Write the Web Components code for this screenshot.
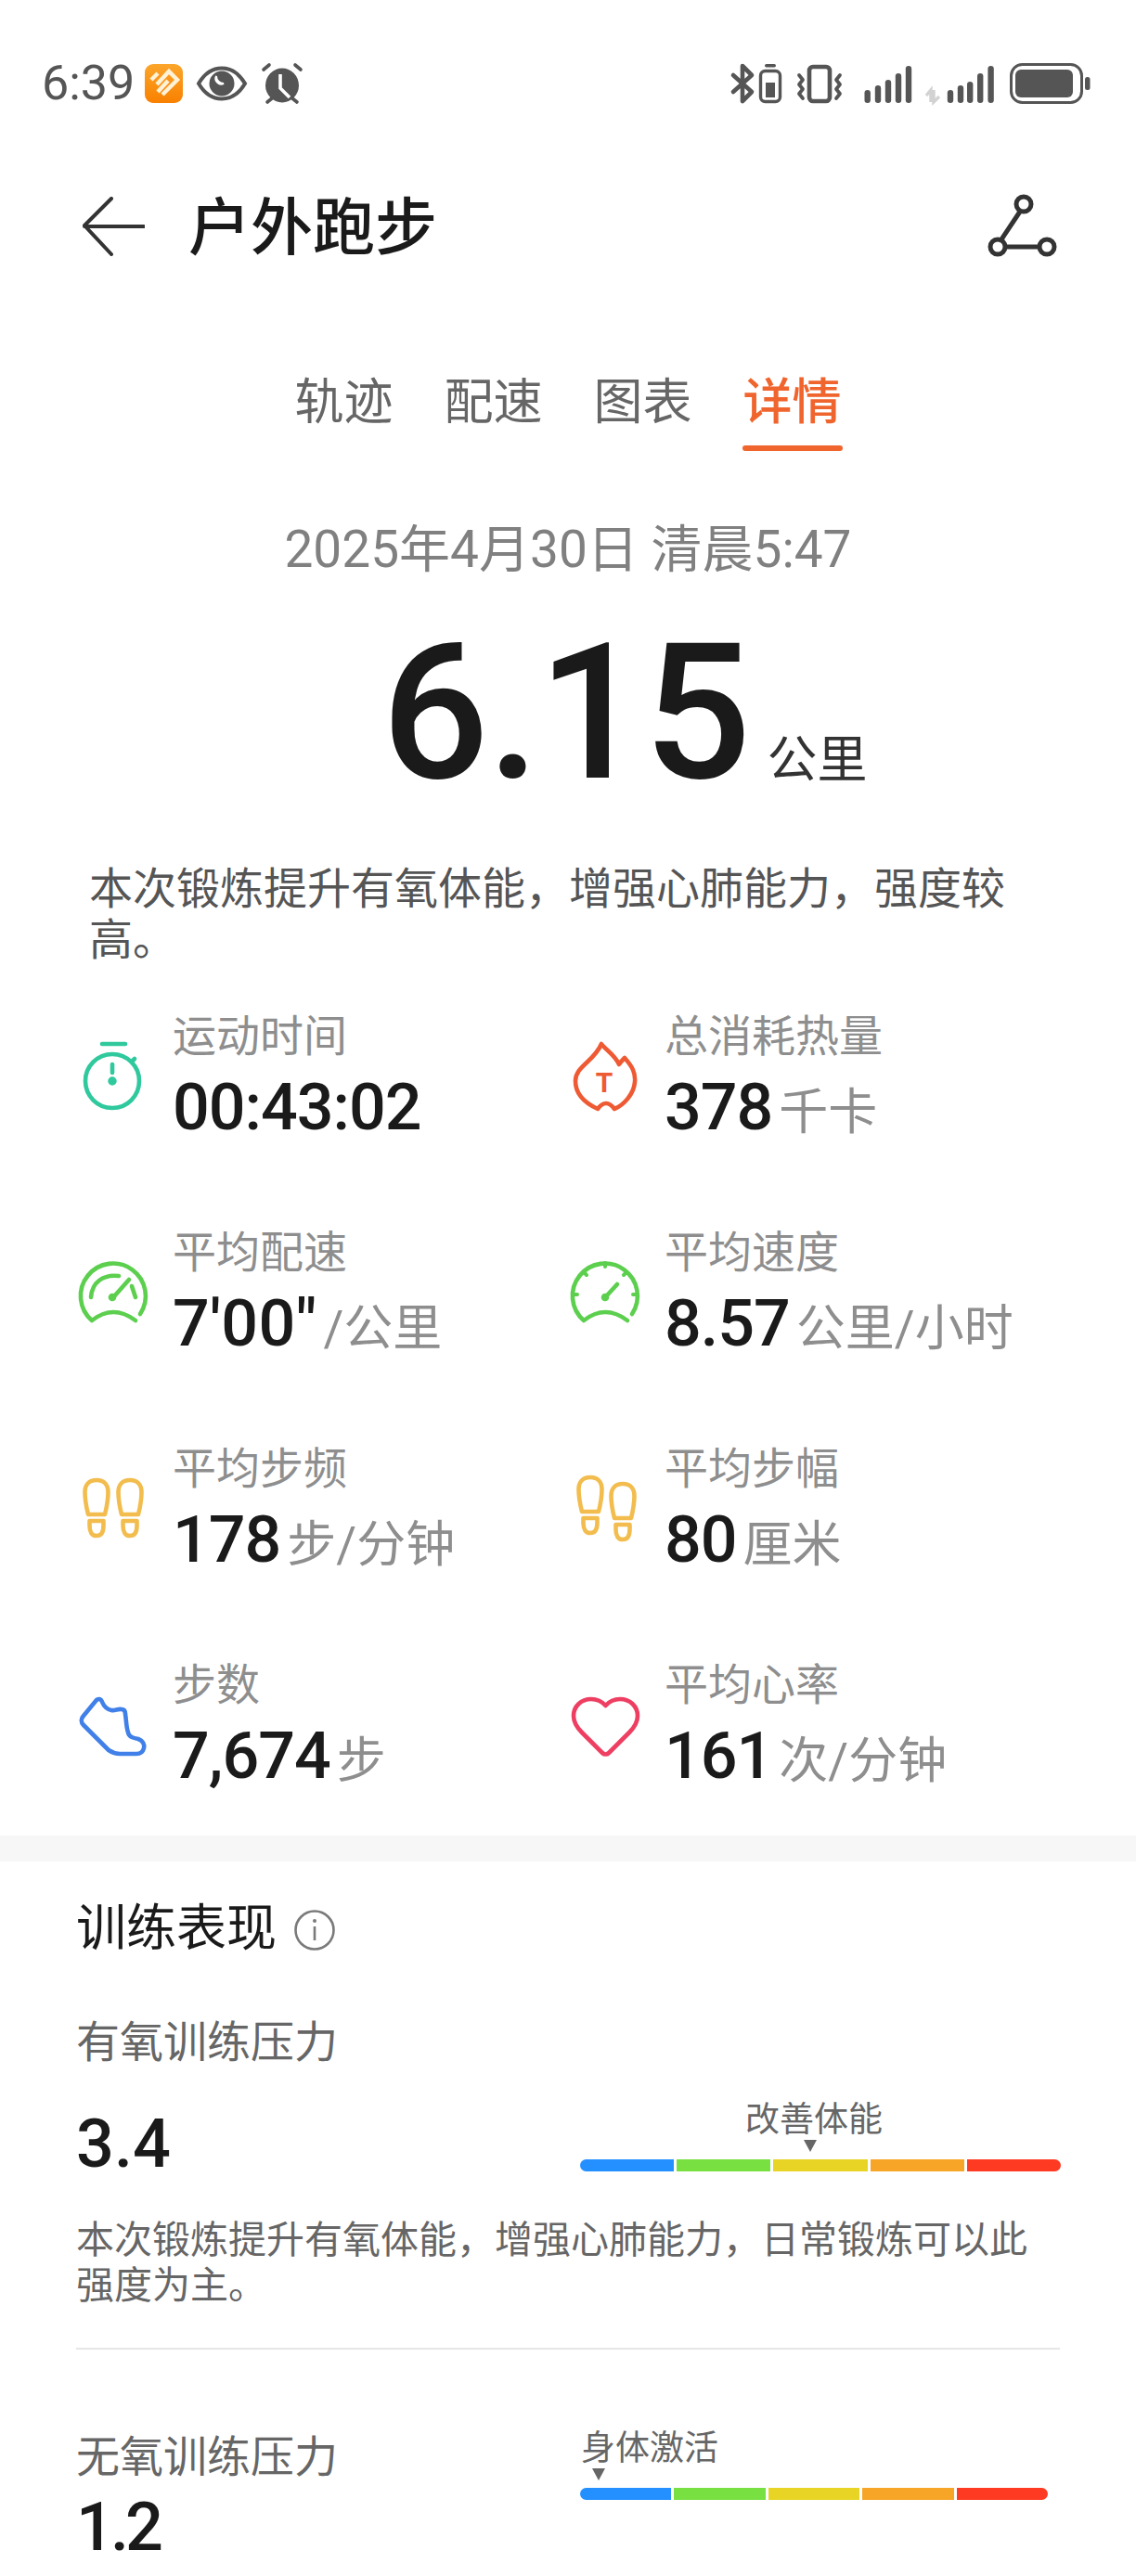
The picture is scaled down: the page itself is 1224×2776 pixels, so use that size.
<!DOCTYPE html>
<html lang="zh">
<head>
<meta charset="utf-8">
<title>户外跑步</title>
<style>
  html, body { margin: 0; padding: 0; background: #fff; width: 1224px; height: 2776px; overflow: hidden; }
  body { font-family: Roboto, "Noto Sans CJK SC", sans-serif; color: #1a1a1a; }
</style>
</head>
<body>
<run-page></run-page>

<script>
class StatusBar extends HTMLElement {
  constructor() {
    super();
    this.attachShadow({ mode: 'open' });
  }
  connectedCallback() {
    this.shadowRoot.innerHTML = `
      <style>
        :host { display: flex; align-items: center; justify-content: space-between; height: 180px; padding: 0 47px 0 45px; color: #555; }
        .left { display: flex; align-items: center; }
        .time { font-size: 52px; line-height: 60px; width: 109px; font-weight: 400; }
        svg { display: block; }
      </style>
      <div class="left">
        <span class="time">6:39</span>
        <svg width="174" height="50" viewBox="156 66 174 50">
          <defs>
            <linearGradient id="app" x1="0" y1="0" x2="0" y2="1">
              <stop offset="0" stop-color="#fba62b"/><stop offset="1" stop-color="#f98000"/>
            </linearGradient>
          </defs>
          <rect x="158" y="70" width="41" height="42" rx="9" fill="url(#app)"/>
          <g fill="none" stroke="#fff2d6" stroke-width="4.4">
            <path d="M165 87 L172 80"/>
            <path d="M177 103 L193 87 L184 78 L171 92"/>
            <path d="M183 88 L172 100"/>
          </g>
          <path d="M216 91 C229 69 253 69 266 91 C253 113 229 113 216 91Z" fill="none" stroke="#555" stroke-width="4"/>
          <circle cx="241" cy="91" r="13.5" fill="#555"/>
          <path d="M235 83 a6 6 0 0 0 8 8 a8 8 0 0 1 -8 -8Z" fill="#fff" stroke="#fff" stroke-width="2"/>
          <ellipse cx="306" cy="93" rx="18" ry="18.5" fill="#555"/>
          <g fill="none" stroke="#555" stroke-width="3.6" stroke-linecap="round">
            <path d="M286 76 L292 71"/><path d="M326 76 L320 71"/>
            <path d="M290 111 L295 107"/><path d="M322 111 L317 107"/>
          </g>
          <path d="M304 81 V96 L314 106" fill="none" stroke="#fff" stroke-width="3.6"/>
        </svg>
      </div>
      <svg width="392" height="50" viewBox="785 66 392 50">
        <g fill="none" stroke="#555" stroke-width="4.6" stroke-linecap="round" stroke-linejoin="round">
          <path d="M790 82 L810 100 L800 110 V72 L810 82 L790 100"/>
        </g>
        <rect x="824" y="70" width="12" height="3.4" rx="1.7" fill="#555"/>
        <rect x="819.5" y="77.5" width="21" height="33" rx="5" fill="none" stroke="#555" stroke-width="3.4"/>
        <rect x="825" y="90" width="10" height="16" fill="#555"/>
        <rect x="872" y="73" width="22" height="37" rx="4" fill="none" stroke="#555" stroke-width="4.6"/>
        <g fill="none" stroke="#555" stroke-width="3.8" stroke-linecap="round" stroke-linejoin="round">
          <path d="M861 82 L865 87 L861 92 L865 97 L861 102 L865 107"/>
          <path d="M905 82 L901 87 L905 92 L901 97 L905 102 L901 107"/>
        </g>
        <g fill="#555">
          <rect x="931.5" y="98" width="6.4" height="14" rx="3.2"/>
          <rect x="942.8" y="93" width="6.4" height="19" rx="3.2"/>
          <rect x="953.8" y="87" width="6.4" height="25" rx="3.2"/>
          <rect x="964.8" y="80" width="6.4" height="32" rx="3.2"/>
          <rect x="975.8" y="72" width="6.4" height="40" rx="3.2"/>
          <rect x="1020.8" y="98" width="6.4" height="14" rx="3.2"/>
          <rect x="1031.8" y="93" width="6.4" height="19" rx="3.2"/>
          <rect x="1042" y="89" width="6.4" height="23" rx="3.2"/>
          <rect x="1053" y="80" width="6.4" height="32" rx="3.2"/>
          <rect x="1064.4" y="72" width="6.4" height="40" rx="3.2"/>
        </g>
        <path d="M1003 111 V98 L998 104 M1006 98 V111 L1012 105" fill="none" stroke="#d2d2d2" stroke-width="3.4"/>
        <rect x="1089.5" y="70.5" width="76" height="41" rx="12" fill="none" stroke="#555" stroke-width="3"/>
        <rect x="1094" y="76" width="62" height="30" rx="6" fill="#555"/>
        <rect x="1169" y="84" width="5.5" height="14" rx="2.5" fill="#555"/>
      </svg>
    `;
  }
}

class NavBar extends HTMLElement {
  constructor() {
    super();
    this.attachShadow({ mode: 'open' });
  }
  connectedCallback() {
    this.shadowRoot.innerHTML = `
      <style>
        :host { display: flex; align-items: center; height: 128px; padding: 0 84px 0 88px; }
        .title { flex: 1; margin-left: 47px; padding-top: 4px; font-size: 67px; line-height: 80px; font-weight: 500; color: #1a1a1a; }
        svg { display: block; }
      </style>
      <svg width="68" height="64" viewBox="88 212 68 64">
        <path d="M155 244 H91 M120 214 L91 243 L120 274" fill="none" stroke="#333" stroke-width="4" stroke-linecap="round" stroke-linejoin="round"/>
      </svg>
      <span class="title"><slot></slot></span>
      <svg width="78" height="72" viewBox="1062 206 78 72">
        <path d="M1099 226 L1079 256 M1084 264 H1119" fill="none" stroke="#333" stroke-width="5"/>
        <g fill="none" stroke="#333" stroke-width="5">
          <circle cx="1103" cy="218" r="8"/><circle cx="1075" cy="264" r="8"/><circle cx="1128" cy="264" r="8"/>
        </g>
      </svg>
    `;
  }
}

class TabStrip extends HTMLElement {
  constructor() {
    super();
    this.attachShadow({ mode: 'open' });
  }
  connectedCallback() {
    const active = this.getAttribute('active');
    const tabs = (this.getAttribute('tabs') || '').split(',');
    this.shadowRoot.innerHTML = `
      <style>
        :host { display: flex; justify-content: center; gap: 55px; margin-top: 94px; height: 84px; }
        .tab { font-size: 53px; line-height: 64px; color: #666; position: relative; }
        .tab.on { color: #f0642d; font-weight: 500; }
        .tab.on::after { content: ''; position: absolute; left: -1px; right: -1px; top: 78px; height: 6px; border-radius: 3px; background: #f0642d; }
      </style>
      ${tabs.map(t => `<span class="tab ${t === active ? 'on' : ''}">${t}</span>`).join('')}
    `;
  }
}

class RunSummary extends HTMLElement {
  constructor() {
    super();
    this.attachShadow({ mode: 'open' });
  }
  connectedCallback() {
    this.shadowRoot.innerHTML = `
      <style>
        :host { display: block; }
        .date { margin-top: 74px; text-align: center; font-size: 55px; line-height: 64px; color: #808080; }
        .dist { display: flex; align-items: baseline; height: 190px; margin-top: 50px; padding-left: 411px; }
        .num { font-size: 204px; line-height: 190px; font-weight: 500; letter-spacing: -2px; color: #1a1a1a; }
        .unit { margin-left: 19px; font-size: 54px; line-height: 60px; color: #333; }
        .note { margin-top: 66px; padding: 0 124px 0 96px; font-size: 47px; line-height: 55px; color: #555; }
      </style>
      <div class="date">${this.getAttribute('date')}</div>
      <div class="dist"><span class="num">${this.getAttribute('distance')}</span><span class="unit">${this.getAttribute('unit')}</span></div>
      <div class="note"><slot></slot></div>
    `;
  }
}

class StatGrid extends HTMLElement {
  constructor() {
    super();
    this.attachShadow({ mode: 'open' });
  }
  connectedCallback() {
    this.shadowRoot.innerHTML = `
      <style>
        :host { display: grid; grid-template-columns: 530px 1fr; row-gap: 85px; margin-top: 47px; padding-left: 82px; }
      </style>
      <slot></slot>
    `;
  }
}

class StatItem extends HTMLElement {
  constructor() {
    super();
    this.attachShadow({ mode: 'open' });
  }
  connectedCallback() {
    const unit = this.getAttribute('unit') || '';
    const spacing = this.getAttribute('value-spacing') || -1;
    this.shadowRoot.innerHTML = `
      <style>
        :host { display: flex; align-items: flex-start; height: 148px; }
        .icon { width: 80px; height: 80px; margin-top: 35px; margin-right: 24px; flex: none; }
        .label { font-size: 47px; line-height: 60px; color: #8e8e8e; }
        .row { display: flex; align-items: baseline; margin-top: 6px; height: 80px; }
        .value { font-size: 70px; line-height: 80px; font-weight: 500; letter-spacing: ${spacing}px; color: #1a1a1a; }
        .unit { font-size: 53px; line-height: 60px; color: #8e8e8e; margin-left: 7px; }
      </style>
      <div class="icon"><slot name="icon"></slot></div>
      <div>
        <div class="label">${this.getAttribute('label')}</div>
        <div class="row"><span class="value">${this.getAttribute('value')}</span><span class="unit">${unit}</span></div>
      </div>
    `;
  }
}

class ScaleBar extends HTMLElement {
  constructor() {
    super();
    this.attachShadow({ mode: 'open' });
  }
  connectedCallback() {
    const labelAt = this.getAttribute('label-at') || 0;
    const markAt = this.getAttribute('mark-at') || 0;
    const width = this.getAttribute('bar-width') || 518;
    this.shadowRoot.innerHTML = `
      <style>
        :host { display: block; }
        .label { margin-left: ${labelAt}px; font-size: 37px; line-height: 44px; color: #666; white-space: nowrap; }
        .mark { width: 0; height: 0; margin: -1px 0 0 ${markAt - 7}px; border-left: 7px solid transparent; border-right: 7px solid transparent; border-top: 13px solid #666; }
        .bar { display: flex; gap: 3px; width: ${width}px; height: 13px; margin-top: 8px; border-radius: 7px; overflow: hidden; }
        .bar i { flex: 1; }
      </style>
      <div class="label">${this.getAttribute('label')}</div>
      <div class="mark"></div>
      <div class="bar">
        <i style="background:#2490ff"></i>
        <i style="background:#78e040"></i>
        <i style="background:#e8d424"></i>
        <i style="background:#f6a527"></i>
        <i style="background:#ff3a22"></i>
      </div>
    `;
  }
}

class StressItem extends HTMLElement {
  constructor() {
    super();
    this.attachShadow({ mode: 'open' });
  }
  connectedCallback() {
    const spacing = this.getAttribute('value-spacing') || 0;
    this.shadowRoot.innerHTML = `
      <style>
        :host { display: grid; grid-template-columns: 543px 1fr; }
        .name { font-size: 47px; line-height: 60px; color: #666; grid-column: 1 / 3; }
        .value { font-size: 72px; line-height: 90px; font-weight: 500; letter-spacing: ${spacing}px; color: #1a1a1a; margin-top: 35px; }
        ::slotted(scale-bar) { margin-top: 32px; }
        .desc { grid-column: 1 / 3; margin-top: 34px; font-size: 41px; line-height: 49px; color: #666; }
        .desc:empty { display: none; }
        :host([compact]) { grid-template-rows: 60px 90px; }
        :host([compact]) .name { grid-column: 1; }
        :host([compact]) .value { grid-column: 1; grid-row: 2; margin-top: 1px; }
        :host([compact]) ::slotted(scale-bar) { grid-column: 2; grid-row: 1 / 3; margin-top: -1px; }
      </style>
      <div class="name">${this.getAttribute('name')}</div>
      <div class="value">${this.getAttribute('value')}</div>
      <slot name="scale"></slot>
      <div class="desc">${this.getAttribute('desc') || ''}</div>
    `;
  }
}

class TrainingSection extends HTMLElement {
  constructor() {
    super();
    this.attachShadow({ mode: 'open' });
  }
  connectedCallback() {
    this.shadowRoot.innerHTML = `
      <style>
        :host { display: block; margin-top: 44px; border-top: 28px solid #f7f7f7; padding: 43px 82px 0; }
        .head { display: flex; align-items: center; height: 64px; font-size: 54px; line-height: 56px; color: #1a1a1a; }
        .head span { margin-top: -4px; }
        .head svg { margin-left: 19px; margin-top: -2px; display: block; }
        .items { margin-top: 58px; display: block; }
        ::slotted(hr) { border: 0; height: 2px; background: #e6e6e6; margin: 42px 0 86px; }
      </style>
      <div class="head"><span>${this.getAttribute('heading')}</span>
        <svg width="44" height="44" viewBox="0 0 44 44">
          <circle cx="22" cy="22" r="20.5" fill="none" stroke="#7a7a7a" stroke-width="2.6"/>
          <circle cx="22" cy="12" r="2" fill="#7a7a7a"/>
          <path d="M22 18 V33" stroke="#7a7a7a" stroke-width="2.6"/>
        </svg>
      </div>
      <div class="items"><slot></slot></div>
    `;
  }
}

class RunPage extends HTMLElement {
  constructor() {
    super();
    this.attachShadow({ mode: 'open' });
  }
  connectedCallback() {
    const gaugeOutline = 'M69 61 A35 35 0 1 0 17 68 Q40 50 64 68';
    const sole = 'M13 44 C10 32 9.5 26 9.5 20 C9.5 12 14 7 22 7 C30 7 34.5 12 34.5 20 C34.5 26 34 32 31 44 Z';
    const heel = 'M14.5 51 H29.5 V56 C29.5 63 27 67 22 67 C17 67 14.5 63 14.5 56 Z';
    this.shadowRoot.innerHTML = `
      <style>
        :host { display: block; width: 1224px; height: 2776px; overflow: hidden; background: #fff; font-family: Roboto, "Noto Sans CJK SC", sans-serif; }
        svg[slot] { display: block; width: 80px; height: 80px; fill: none; stroke-width: 4.6; stroke-linecap: round; stroke-linejoin: round; }
      </style>
      <status-bar></status-bar>
      <nav-bar>户外跑步</nav-bar>
      <tab-strip tabs="轨迹,配速,图表,详情" active="详情"></tab-strip>
      <run-summary date="2025年4月30日 清晨5:47" distance="6.15" unit="公里">本次锻炼提升有氧体能，增强心肺能力，强度较高。</run-summary>
      <stat-grid>
        <stat-item label="运动时间" value="00:43:02">
          <svg slot="icon" viewBox="0 0 80 80" stroke="#2fc99d">
            <path d="M28 3 H53"/>
            <circle cx="39" cy="43" r="29"/>
            <path d="M39 25 V34"/><path d="M60 22 L63 19"/>
            <circle cx="39" cy="43" r="3.4" fill="#2fc99d" stroke-width="2.6"/>
          </svg>
        </stat-item>
        <stat-item label="总消耗热量" value="378" unit="千卡">
          <svg slot="icon" viewBox="0 0 80 80" stroke="#ee5a33">
            <path d="M36 3 C40 9 50 14 55 25 C57 22 59 20 61 18 C69 27 73 34 72 44 C71 57 60 69 50 73 C47 69 45 67 41 67 C37 67 35 69 32 73 C19 67 8 57 8 43 C8 27 28 22 36 3Z"/>
            <text x="39" y="55" text-anchor="middle" font-family="Roboto" font-size="30" font-weight="700" fill="#ee5a33" stroke="none">T</text>
          </svg>
        </stat-item>
        <stat-item label="平均配速" value="7'00&quot;" value-spacing="0.4" unit="/公里">
          <svg slot="icon" viewBox="0 0 80 80" stroke="#5ccf4e">
            <path d="${gaugeOutline}"/>
            <path d="M16 43 C17 27 29 18 46 20"/>
            <path d="M41 42 L57 24"/><path d="M60 31 L64 43"/>
            <circle cx="39" cy="43" r="3" fill="#5ccf4e" stroke-width="2.6"/>
          </svg>
        </stat-item>
        <stat-item label="平均速度" value="8.57" unit="公里/小时">
          <svg slot="icon" viewBox="0 0 80 80" stroke="#5ccf4e">
            <path d="${gaugeOutline}"/>
            <path d="M40 6 V10 M17 16 L20 19 M63 16 L60 19 M6 40 H10 M74 40 H70" stroke-width="4"/>
            <path d="M42 41 L53 29"/>
            <circle cx="40" cy="43" r="3" fill="#5ccf4e" stroke-width="2.6"/>
          </svg>
        </stat-item>
        <stat-item label="平均步频" value="178" unit="步/分钟">
          <svg slot="icon" viewBox="0 0 80 80" stroke="#f2bd4e">
            <path d="${sole}"/><path d="${heel}"/>
            <g transform="translate(36 0)"><path d="${sole}"/><path d="${heel}"/></g>
          </svg>
        </stat-item>
        <stat-item label="平均步幅" value="80" unit="厘米">
          <svg slot="icon" viewBox="0 0 80 80" stroke="#f2bd4e">
            <g transform="translate(2 -3)"><path d="${sole}"/><path d="${heel}"/></g>
            <g transform="translate(37 4)"><path d="${sole}"/><path d="${heel}"/></g>
          </svg>
        </stat-item>
        <stat-item label="步数" value="7,674" unit="步">
          <svg slot="icon" viewBox="0 0 80 80" stroke="#4080e8">
            <path d="M22 11 C25 9 27 10 28 13 C30 18 33 21 38 22 C42 23 45 20 49 21 C52 21 53 23 53 26 C54 32 54 40 56 46 C57 51 62 52 67 53 C72 55 74 59 73 63 C72 67 69 69 65 69 L47 69 C42 69 38 67 35 65 L8 38 C5 35 5 31 8 28 Z"/>
          </svg>
        </stat-item>
        <stat-item label="平均心率" value="161" unit="次/分钟">
          <svg slot="icon" viewBox="0 0 80 80" stroke="#ee3f62">
            <path d="M40.5 17 C36 12 30 10 25 10 C14 10 6 18 6 28 C6 36 10 41 15 46 L37 68 C39 70 42 70 44 68 L66 46 C71 41 75 36 75 28 C75 18 67 10 56 10 C51 10 45 12 40.5 17Z"/>
          </svg>
        </stat-item>
      </stat-grid>
      <training-section heading="训练表现">
        <stress-item name="有氧训练压力" value="3.4" desc="本次锻炼提升有氧体能，增强心肺能力，日常锻炼可以此强度为主。">
          <scale-bar slot="scale" label="改善体能" label-at="178" mark-at="248" bar-width="518"></scale-bar>
        </stress-item>
        <hr>
        <stress-item compact name="无氧训练压力" value="1.2" value-spacing="-4">
          <scale-bar slot="scale" label="身体激活" label-at="1" mark-at="20" bar-width="504"></scale-bar>
        </stress-item>
      </training-section>
    `;
  }
}

customElements.define('status-bar', StatusBar);
customElements.define('nav-bar', NavBar);
customElements.define('tab-strip', TabStrip);
customElements.define('run-summary', RunSummary);
customElements.define('stat-grid', StatGrid);
customElements.define('stat-item', StatItem);
customElements.define('scale-bar', ScaleBar);
customElements.define('stress-item', StressItem);
customElements.define('training-section', TrainingSection);
customElements.define('run-page', RunPage);
</script>
</body>
</html>
